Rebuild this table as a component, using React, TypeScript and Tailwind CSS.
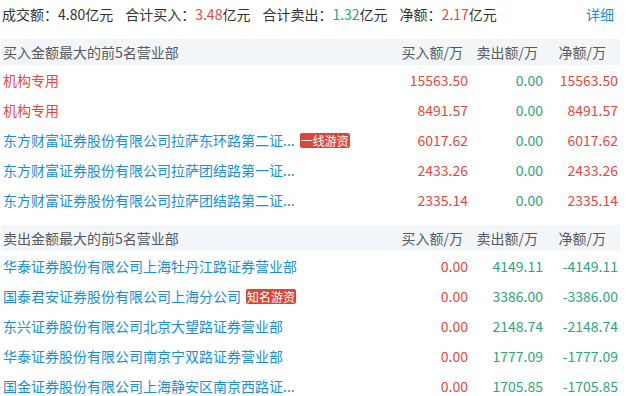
import React from "react";

const RED = "text-[#e8463f]";
const GREEN = "text-[#2fa57b]";
const BLUE = "text-[#1b8fd5]";

type Row = { name: string; badge?: string; inst?: boolean; buy: string; sell: string; net: string };

const buyRows: Row[] = [
  { name: "机构专用", inst: true, buy: "15563.50", sell: "0.00", net: "15563.50" },
  { name: "机构专用", inst: true, buy: "8491.57", sell: "0.00", net: "8491.57" },
  { name: "东方财富证券股份有限公司拉萨东环路第二证...", badge: "一线游资", buy: "6017.62", sell: "0.00", net: "6017.62" },
  { name: "东方财富证券股份有限公司拉萨团结路第一证...", buy: "2433.26", sell: "0.00", net: "2433.26" },
  { name: "东方财富证券股份有限公司拉萨团结路第二证...", buy: "2335.14", sell: "0.00", net: "2335.14" },
];

const sellRows: Row[] = [
  { name: "华泰证券股份有限公司上海牡丹江路证券营业部", buy: "0.00", sell: "4149.11", net: "-4149.11" },
  { name: "国泰君安证券股份有限公司上海分公司", badge: "知名游资", buy: "0.00", sell: "3386.00", net: "-3386.00" },
  { name: "东兴证券股份有限公司北京大望路证券营业部", buy: "0.00", sell: "2148.74", net: "-2148.74" },
  { name: "华泰证券股份有限公司南京宁双路证券营业部", buy: "0.00", sell: "1777.09", net: "-1777.09" },
  { name: "国金证券股份有限公司上海静安区南京西路证...", buy: "0.00", sell: "1705.85", net: "-1705.85" },
];

function Header({ title }: { title: string }) {
  return (
    <div className="flex h-[26px] items-center bg-[#f3f6f9] pl-[2px] pr-[2px] text-[#555a60] leading-[26px]">
      <div className="flex-1 whitespace-nowrap">{title}</div>
      <div className="w-[75px] text-right pr-[5px] whitespace-nowrap">买入额/万</div>
      <div className="w-[75px] text-right pr-[5px] whitespace-nowrap">卖出额/万</div>
      <div className="w-[75px] text-right pr-[12px] whitespace-nowrap">净额/万</div>
    </div>
  );
}

function DataRow({ r, sell }: { r: Row; sell?: boolean }) {
  return (
    <div className="flex h-[30px] items-center pl-[2px] pr-[2px] leading-[30px]">
      <div className="flex min-w-0 flex-1 items-center whitespace-nowrap">
        <span className={r.inst ? RED : BLUE}>{r.name}</span>
        {r.badge && (
          <span className="ml-[5px] inline-flex h-[15px] items-center rounded-[2px] bg-[#d9473a] px-[1px] text-[12px] leading-[15px] text-white">
            {r.badge}
          </span>
        )}
      </div>
      <div className={`w-[75px] text-right ${RED}`}>{r.buy}</div>
      <div className={`w-[75px] text-right ${GREEN}`}>{r.sell}</div>
      <div className={`w-[75px] text-right ${sell ? GREEN : RED}`}>{r.net}</div>
    </div>
  );
}

export default function App() {
  return (
    <div className="h-[396px] w-[626px] overflow-hidden bg-white font-['Microsoft_YaHei','Noto_Sans_CJK_SC',sans-serif] text-[14px]">
      <div className="ml-[1px] w-[619px]">
        <div className="flex h-[29px] items-center pl-[1px] pr-[6px] text-[#333] leading-[29px] whitespace-nowrap">
          <span>成交额：4.80亿元</span>
          <span className="ml-[12px]">
            合计买入：<span className={RED}>3.48</span>亿元
          </span>
          <span className="ml-[12px]">
            合计卖出：<span className={GREEN}>1.32</span>亿元
          </span>
          <span className="ml-[12px]">
            净额：<span className={RED}>2.17</span>亿元
          </span>
          <span className={`ml-auto ${BLUE}`}>详细</span>
        </div>
        <div className="mt-[10px]">
          <Header title="买入金额最大的前5名营业部" />
          {buyRows.map((r, i) => (
            <DataRow key={i} r={r} />
          ))}
        </div>
        <div className="mt-[10px]">
          <Header title="卖出金额最大的前5名营业部" />
          {sellRows.map((r, i) => (
            <DataRow key={i} r={r} sell />
          ))}
        </div>
      </div>
    </div>
  );
}
